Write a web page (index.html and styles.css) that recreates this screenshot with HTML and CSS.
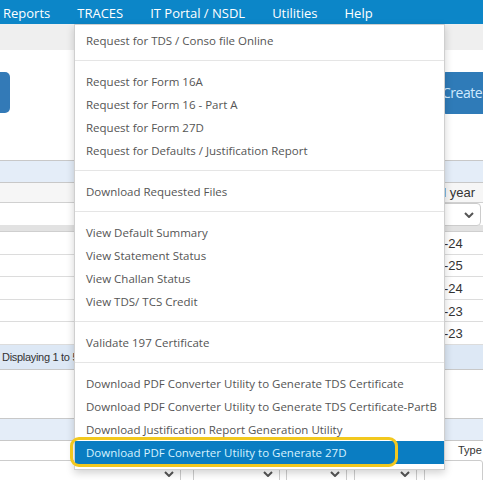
FILE: index.html
```html
<!DOCTYPE html>
<html>
<head>
<meta charset="utf-8">
<link rel="stylesheet" href="styles.css">
</head>
<body>
<nav class="topnav">
  <span class="nav-item">Reports</span>
  <span class="nav-item">TRACES</span>
  <span class="nav-item">IT Portal / NSDL</span>
  <span class="nav-item">Utilities</span>
  <span class="nav-item">Help</span>
</nav>
<div class="subbar"></div>
<div class="toolbar">
  <div class="btn-left"></div>
  <div class="btn-create">Create</div>
</div>
<div class="grid">
  <div class="grid-title"></div>
  <div class="grid-head"><span class="col-fy">Financial year</span></div>
  <div class="grid-filter"><div class="select select-fy"><svg class="chev-svg" viewBox="0 0 10 6"><path d="M1 1 L5 5 L9 1" /></svg></div></div>
  <div class="grid-sep"></div>
  <div class="grid-row"><span class="cell-fy">2023-24</span></div>
  <div class="grid-row"><span class="cell-fy">2024-25</span></div>
  <div class="grid-row"><span class="cell-fy">2023-24</span></div>
  <div class="grid-row"><span class="cell-fy">2022-23</span></div>
  <div class="grid-row"><span class="cell-fy">2022-23</span></div>
  <div class="grid-footer">Displaying 1 to 5 of 5 items</div>
</div>
<div class="gap-area"></div>
<div class="grid2">
  <div class="grid-title2"></div>
  <div class="grid-head2"><span class="col-type">Type</span></div>
  <div class="grid-filter2">
    <div class="select s1"><svg class="chev-svg" viewBox="0 0 10 6"><path d="M1 1 L5 5 L9 1" /></svg></div>
    <div class="select s2"><svg class="chev-svg" viewBox="0 0 10 6"><path d="M1 1 L5 5 L9 1" /></svg></div>
    <div class="select s3"><svg class="chev-svg" viewBox="0 0 10 6"><path d="M1 1 L5 5 L9 1" /></svg></div>
    <div class="select s4"><svg class="chev-svg" viewBox="0 0 10 6"><path d="M1 1 L5 5 L9 1" /></svg></div>
    <div class="select s5"></div>
  </div>
</div>

<ul class="menu">
  <li class="menu-item">Request for TDS / Conso file Online</li>
  <li class="menu-sep"></li>
  <li class="menu-item">Request for Form 16A</li>
  <li class="menu-item">Request for Form 16 - Part A</li>
  <li class="menu-item">Request for Form 27D</li>
  <li class="menu-item">Request for Defaults / Justification Report</li>
  <li class="menu-sep"></li>
  <li class="menu-item">Download Requested Files</li>
  <li class="menu-sep"></li>
  <li class="menu-item">View Default Summary</li>
  <li class="menu-item">View Statement Status</li>
  <li class="menu-item">View Challan Status</li>
  <li class="menu-item">View TDS/ TCS Credit</li>
  <li class="menu-sep"></li>
  <li class="menu-item">Validate 197 Certificate</li>
  <li class="menu-sep"></li>
  <li class="menu-item">Download PDF Converter Utility to Generate TDS Certificate</li>
  <li class="menu-item">Download PDF Converter Utility to Generate TDS Certificate-PartB</li>
  <li class="menu-item">Download Justification Report Generation Utility</li>
  <li class="menu-item active">Download PDF Converter Utility to Generate 27D</li>
</ul>
<div class="annotation"></div>
</body>
</html>
```

FILE: styles.css
```css
* { box-sizing: border-box; }
html, body { margin: 0; padding: 0; }
body {
  width: 483px;
  height: 480px;
  overflow: hidden;
  position: relative;
  background: #fff;
  font-family: "Liberation Sans", Arial, sans-serif;
  color: #333;
}
.topnav {
  height: 24px;
  background: #0c86c8;
  display: flex;
  align-items: center;
  gap: 27px;
  padding-left: 3px;
  padding-top: 1px;
  font-family: "Open Sans", "Noto Sans", sans-serif;
  font-size: 13px;
  color: #fff;
}
.nav-item { white-space: nowrap; }
.subbar { height: 26px; background: #efefef; }
.toolbar {
  height: 110px;
  display: flex;
  justify-content: space-between;
  align-items: flex-start;
  padding-top: 22px;
}
.btn-left {
  width: 10px;
  height: 41px;
  background: #337ab7;
  border-radius: 0 5px 5px 0;
}
.btn-create {
  width: 42px;
  height: 42px;
  background: #2f7bb8;
  border-radius: 5px 0 0 5px;
  color: #cfeaff;
  font-family: "Open Sans", sans-serif;
  font-size: 14px;
  letter-spacing: -0.5px;
  line-height: 42px;
  padding-left: 1px;
  white-space: nowrap;
}
.grid { border-top: 1px solid #c8c8c8; }
.grid-title { height: 22px; background: #e4edf8; border-bottom: 1px solid #c8c8c8; }
.grid-head {
  height: 20px;
  background: #f6f6f6;
  border-bottom: 1px solid #d0d0d0;
  display: flex;
  justify-content: flex-end;
  align-items: center;
  padding-right: 8px;
  font-size: 13px;
  color: #333;
}
.grid-filter {
  height: 22px;
  display: flex;
  justify-content: flex-end;
  align-items: flex-end;
  padding-right: 2px;
}
.select {
  background: #fff;
  border: 1px solid #ccc;
  border-radius: 4px;
  position: relative;
}
.select-fy { width: 90px; height: 23px; margin-bottom: -1px; }
.select-fy .chev-svg { right: 6px; top: 8px; }
.grid-sep { height: 7px; background: #e2e2e2; border-bottom: 1px solid #cfcfcf; }
.grid-row {
  height: 22.6px;
  border-bottom: 1px solid #dcdcdc;
  display: flex;
  align-items: center;
  padding-left: 445px;
  padding-top: 1px;
  font-size: 13px;
  color: #333;
}
.cell-fy { margin-left: -30px; }
.grid-footer {
  height: 25px;
  background: #dde8f5;
  border-bottom: 1px solid #c8c8c8;
  font-size: 11px;
  letter-spacing: -0.3px;
  line-height: 25px;
  padding-left: 2px;
  color: #333;
}
.gap-area { height: 48px; }
.grid2 { border-top: 1px solid #c8c8c8; }
.grid-title2 { height: 22px; background: #e4edf8; border-bottom: 1px solid #c8c8c8; }
.grid-head2 {
  height: 19px;
  display: flex;
  align-items: center;
  padding-left: 458px;
  font-size: 11px;
  color: #333;
  white-space: nowrap;
}
.grid-filter2 { height: 30px; display: flex; }
.grid-filter2 .select { height: 30px; border-radius: 3px; }
.s1 { width: 187px; margin-left: -4px; }
.s2 { width: 87px; margin-left: 12px; }
.s3 { width: 62px; margin-left: 6px; }
.s4 { width: 63px; margin-left: 7px; }
.s5 { width: 60px; margin-left: 7px; }
.chev-svg {
  position: absolute;
  right: 6px;
  top: 10px;
  width: 10px;
  height: 6px;
  fill: none;
  stroke: #555;
  stroke-width: 2;
}

.menu {
  position: absolute;
  left: 74px;
  top: 24px;
  width: 371px;
  margin: 0;
  padding: 4px 0 5px;
  list-style: none;
  background: #fff;
  border: 1px solid #cfcfcf;
  box-shadow: 0 3px 8px rgba(0,0,0,0.18);
  font-family: "Open Sans", "Noto Sans", sans-serif;
  font-size: 11.5px;
  color: #555;
}
.menu-item {
  height: 23px;
  line-height: 23px;
  padding-left: 11px;
  white-space: nowrap;
}
.menu-item.active {
  background: #0a7dc2;
  color: #d6f2ff;
}
.menu-sep {
  height: 1px;
  margin: 8px 0 9px;
  background: #e5e5e5;
}
.annotation {
  position: absolute;
  left: 70px;
  top: 437px;
  width: 328px;
  height: 30px;
  border: 3px solid #f2c81e;
  border-radius: 9px;
}
```
